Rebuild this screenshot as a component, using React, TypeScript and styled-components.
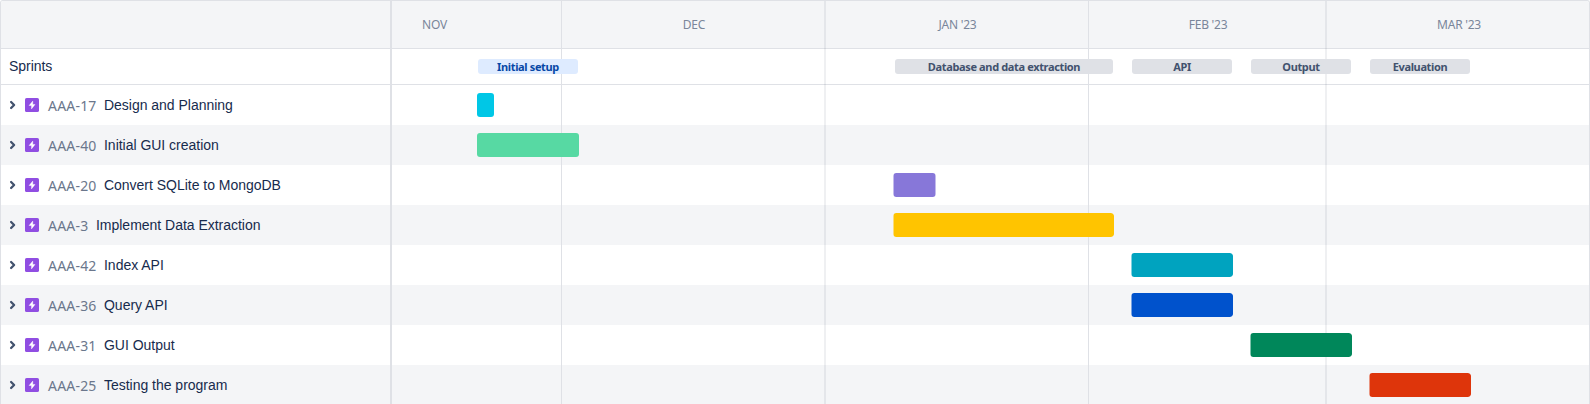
import React from "react";
import styled, { createGlobalStyle } from "styled-components";

const GlobalStyle = createGlobalStyle`
  *, *::before, *::after { box-sizing: border-box; }
  html, body { margin: 0; padding: 0; background: #fff; overflow: hidden; }
`;

const uiFont = `"Noto Sans", "Open Sans", sans-serif`;

const Roadmap = styled.div`
  display: flex;
  width: 1590px;
  height: 404px;
  overflow: hidden;
  background: #fff;
  border: 1px solid #dfe1e6;
  border-bottom: 0;
  border-radius: 3px 3px 0 0;
  color: #172b4d;
  font-family: "Liberation Sans", Arial, sans-serif;
`;

const Sidebar = styled.div`
  flex: none;
  width: 391px;
  border-right: 2px solid #dfe1e6;
`;

const HeaderBlank = styled.div`
  height: 48px;
  background: #f4f5f7;
  border-bottom: 1px solid #dfe1e6;
`;

const SprintsLabel = styled.div`
  display: flex;
  align-items: center;
  height: 36px;
  padding: 0 0 1px 8px;
  border-bottom: 1px solid #dfe1e6;
  font-size: 14px;
  letter-spacing: -0.05px;
`;

const EpicRow = styled.div<{ $shaded: boolean }>`
  display: flex;
  align-items: center;
  height: 40px;
  padding-left: 8px;
  background: ${(p) => (p.$shaded ? "#f4f5f7" : "#fff")};
`;

const Chevron = styled.svg`
  flex: none;
  width: 8px;
  height: 10px;
  margin-right: 8px;
`;

const EpicIcon = styled.svg`
  flex: none;
  width: 14px;
  height: 14px;
  margin-right: 9px;
`;

const EpicKey = styled.span<{ $width: number }>`
  flex: none;
  width: ${(p) => p.$width}px;
  padding-top: 2px;
  color: #6b778c;
  font-family: ${uiFont};
  font-size: 14px;
  line-height: 20px;
  letter-spacing: 0.2px;
  white-space: nowrap;
`;

const EpicName = styled.span`
  font-size: 14px;
  line-height: 20px;
  letter-spacing: -0.02px;
  white-space: nowrap;
`;

const Timeline = styled.div`
  position: relative;
  flex: 1;
  min-width: 0;
`;

const MonthHeader = styled.div`
  display: flex;
  height: 48px;
  background: #f4f5f7;
  border-bottom: 1px solid #dfe1e6;
`;

const Month = styled.div<{ $width: number; $inset?: number }>`
  display: flex;
  flex: none;
  align-items: center;
  justify-content: center;
  width: ${(p) => p.$width}px;
  padding-right: ${(p) => p.$inset ?? 0}px;
  color: #7a869a;
  font-family: ${uiFont};
  font-size: 12px;
  letter-spacing: -0.25px;
  white-space: nowrap;
`;

/* Month separators run over the header and every row, under the bars. */
const GridLines = styled.div`
  position: absolute;
  inset: 0;
  display: flex;
  pointer-events: none;
`;

const GridColumn = styled.div<{ $width: number; $split?: boolean }>`
  flex: none;
  width: ${(p) => p.$width}px;
  border-right: ${(p) =>
    p.$split ? "2px solid rgba(9, 30, 66, 0.065)" : "1px solid #dfe1e6"};
`;

const SprintTrack = styled.div`
  display: flex;
  height: 36px;
  padding-top: 10px;
  border-bottom: 1px solid #dfe1e6;
`;

const Sprint = styled.div<{ $gap: number; $width: number; $active?: boolean }>`
  position: relative;
  flex: none;
  width: ${(p) => p.$width}px;
  height: 15px;
  margin-left: ${(p) => p.$gap}px;
  border-radius: 3px;
  background: ${(p) => (p.$active ? "#deebff" : "#dfe1e6")};
  color: ${(p) => (p.$active ? "#0747a6" : "#42526e")};
  font-family: ${uiFont};
  font-size: 11px;
  font-weight: 700;
  line-height: 16px;
  letter-spacing: -0.36px;
  text-align: center;
  white-space: nowrap;
`;

const Track = styled.div<{ $shaded: boolean }>`
  display: flex;
  align-items: center;
  height: 40px;
  background: ${(p) => (p.$shaded ? "#f4f5f7" : "#fff")};
`;

const Bar = styled.div<{
  $start: number;
  $width: number;
  $color: string;
  $fade?: string;
}>`
  position: relative;
  z-index: 1;
  width: ${(p) => p.$width}px;
  height: 24px;
  margin-left: ${(p) => p.$start}px;
  border-radius: 3px;
  background: ${(p) => p.$color};
  ${(p) => p.$fade && `mask-image: linear-gradient(to right, ${p.$fade});`}
`;

const fadeStart = "rgba(0,0,0,.5) 1px, #000 1px";
const fadeBoth =
  "rgba(0,0,0,.5) 1px, #000 1px, #000 calc(100% - 1px), rgba(0,0,0,.5) calc(100% - 1px)";

const months = [
  { label: "NOV", width: 170, inset: 85 },
  { label: "DEC", width: 264, split: true },
  { label: "JAN '23", width: 263 },
  { label: "FEB '23", width: 238, split: true },
  { label: "MAR '23", width: 264 },
];

const sprints = [
  { label: "Initial setup", gap: 86, width: 100, active: true },
  { label: "Database and data extraction", gap: 317, width: 218 },
  { label: "API", gap: 19, width: 100 },
  { label: "Output", gap: 19, width: 100 },
  { label: "Evaluation", gap: 19, width: 100 },
];

const epics = [
  { id: "AAA-17", name: "Design and Planning", start: 85, width: 17, color: "#00c7e6" },
  { id: "AAA-40", name: "Initial GUI creation", start: 85, width: 102, color: "#57d9a3" },
  { id: "AAA-20", name: "Convert SQLite to MongoDB", start: 501, width: 43, color: "#8777d9", fade: fadeBoth },
  { id: "AAA-3", name: "Implement Data Extraction", start: 501, width: 221, color: "#ffc400", fade: fadeStart },
  { id: "AAA-42", name: "Index API", start: 739, width: 102, color: "#00a3bf", fade: fadeStart },
  { id: "AAA-36", name: "Query API", start: 739, width: 102, color: "#0052cc", fade: fadeStart },
  { id: "AAA-31", name: "GUI Output", start: 858, width: 102, color: "#00875a", fade: fadeStart },
  { id: "AAA-25", name: "Testing the program", start: 977, width: 102, color: "#de350b", fade: fadeStart },
];

export default function App() {
  return (
    <>
      <GlobalStyle />
      <Roadmap>
        <Sidebar>
          <HeaderBlank />
          <SprintsLabel>Sprints</SprintsLabel>
          {epics.map((e, i) => (
            <EpicRow key={e.id} $shaded={i % 2 === 1}>
              <Chevron viewBox="0 0 8 10" fill="none">
                <path
                  d="M2.1 2 5.1 5l-3 3"
                  stroke="#42526e"
                  strokeWidth="2.3"
                  strokeLinecap="round"
                  strokeLinejoin="round"
                />
              </Chevron>
              <EpicIcon viewBox="0 0 14 14">
                <rect width="14" height="14" rx="1.6" fill="#904ee2" />
                <path
                  d="M7.8 3.1 4.1 7.5h2.4v3.4L10 6.5H7.8z"
                  fill="#fff"
                  stroke="#fff"
                  strokeWidth=".4"
                  strokeLinejoin="round"
                />
              </EpicIcon>
              <EpicKey $width={e.id.length === 6 ? 56 : 48}>{e.id}</EpicKey>
              <EpicName>{e.name}</EpicName>
            </EpicRow>
          ))}
        </Sidebar>
        <Timeline>
          <MonthHeader>
            {months.map((m) => (
              <Month key={m.label} $width={m.width} $inset={m.inset}>
                {m.label}
              </Month>
            ))}
          </MonthHeader>
          <GridLines>
            {months.slice(0, 4).map((m) => (
              <GridColumn key={m.label} $width={m.width} $split={m.split} />
            ))}
          </GridLines>
          <SprintTrack>
            {sprints.map((s) => (
              <Sprint key={s.label} $gap={s.gap} $width={s.width} $active={s.active}>
                {s.label}
              </Sprint>
            ))}
          </SprintTrack>
          {epics.map((e, i) => (
            <Track key={e.id} $shaded={i % 2 === 1}>
              <Bar $start={e.start} $width={e.width} $color={e.color} $fade={e.fade} />
            </Track>
          ))}
        </Timeline>
      </Roadmap>
    </>
  );
}
